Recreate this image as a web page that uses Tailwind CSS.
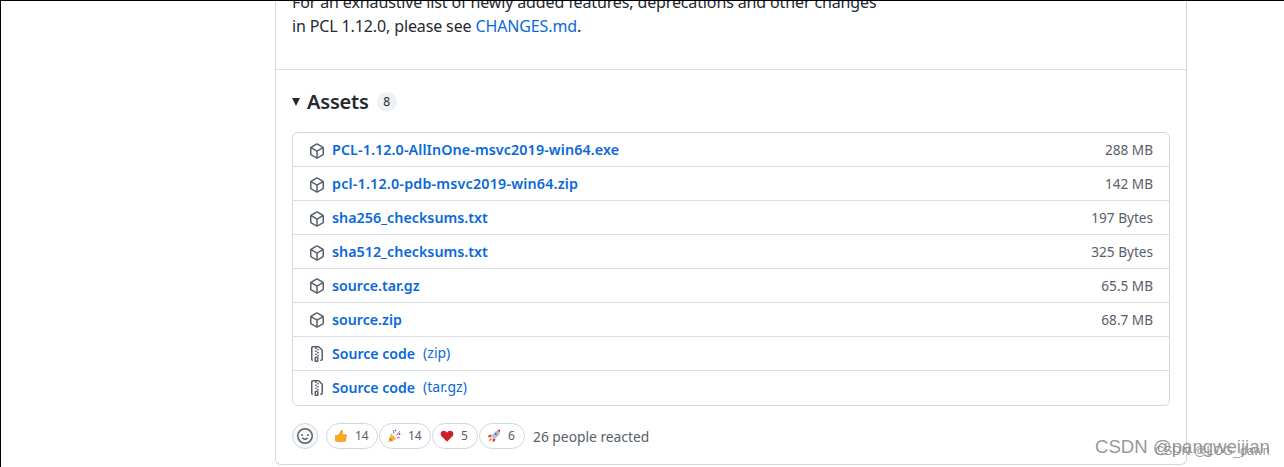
<!DOCTYPE html>
<html lang="en">
<head>
    <meta charset="UTF-8">
    <title>Release PCL 1.12.0</title>
    <script src="https://cdn.jsdelivr.net/npm/@tailwindcss/browser@4"></script>
</head>
<body class="bg-white font-['Noto_Sans',sans-serif] text-[#24292f]">

<div class="relative h-[467px] w-[1284px] overflow-hidden border-l border-t border-l-black border-t-black">

    <!-- Release card -->
    <div class="ml-[274px] mt-[-11px] h-[475px] w-[912px] rounded-b-md border-x border-b border-[#d0d7de]">
        <div class="h-[80px] border-b border-[#d8dee4] px-4 text-base leading-6 tracking-[-0.13px]">
            <p class="whitespace-nowrap">For an exhaustive list of newly added features, deprecations and other changes</p>
            <p>in PCL 1.12.0, please see <a href="#" class="text-[#0969da]">CHANGES.md</a>.</p>
        </div>

        <div class="px-4">
            <div class="mt-[20px] flex h-6 items-center">
                <span class="h-0 w-0 border-x-[4px] border-t-[8px] border-x-transparent border-t-[#24292f]"></span>
                <h2 class="ml-[7px] text-[20px] font-semibold tracking-[-0.2px]">Assets</h2>
                <span class="ml-2 flex h-5 w-[20px] items-center justify-center rounded-full bg-[#eff1f3] text-xs">8</span>
            </div>

            <!-- Asset list -->
            <div class="mt-[18px] h-[274px] w-[878px] rounded-md border border-[#d0d7de] text-[13.6px]">
                <div class="flex h-[33px] items-center justify-between pl-4 pr-4">
                    <div class="flex items-center gap-[7px]">
                        <svg class="mt-[2px]" width="16" height="16" viewBox="0 0 16 16" fill="#57606a"><path d="m8.878.392 5.25 3.045c.54.314.872.89.872 1.514v6.098a1.75 1.75 0 0 1-.872 1.514l-5.25 3.045a1.75 1.75 0 0 1-1.756 0l-5.25-3.045A1.75 1.75 0 0 1 1 11.049V4.951c0-.624.332-1.201.872-1.514L7.122.392a1.75 1.75 0 0 1 1.756 0ZM7.875 1.69l-4.63 2.685L8 7.133l4.755-2.758-4.63-2.685a.248.248 0 0 0-.25 0ZM2.5 5.677v5.372c0 .09.047.171.125.216l4.625 2.683V8.432Zm6.25 8.271 4.625-2.683a.25.25 0 0 0 .125-.216V5.677L8.75 8.432Z"/></svg>
                        <a href="#" class="text-[14.3px] font-semibold tracking-[0.1px] text-[#0969da]">PCL-1.12.0-AllInOne-msvc2019-win64.exe</a>
                    </div>
                    <span class="mt-[2px] text-[#57606a]">288 MB</span>
                </div>
                <div class="flex h-[34px] items-center justify-between border-t border-[#d8dee4] pl-4 pr-4">
                    <div class="flex items-center gap-[7px]">
                        <svg class="mt-[2px]" width="16" height="16" viewBox="0 0 16 16" fill="#57606a"><path d="m8.878.392 5.25 3.045c.54.314.872.89.872 1.514v6.098a1.75 1.75 0 0 1-.872 1.514l-5.25 3.045a1.75 1.75 0 0 1-1.756 0l-5.25-3.045A1.75 1.75 0 0 1 1 11.049V4.951c0-.624.332-1.201.872-1.514L7.122.392a1.75 1.75 0 0 1 1.756 0ZM7.875 1.69l-4.63 2.685L8 7.133l4.755-2.758-4.63-2.685a.248.248 0 0 0-.25 0ZM2.5 5.677v5.372c0 .09.047.171.125.216l4.625 2.683V8.432Zm6.25 8.271 4.625-2.683a.25.25 0 0 0 .125-.216V5.677L8.75 8.432Z"/></svg>
                        <a href="#" class="text-[14.3px] font-semibold tracking-[0.2px] text-[#0969da]">pcl-1.12.0-pdb-msvc2019-win64.zip</a>
                    </div>
                    <span class="mt-[2px] text-[#57606a]">142 MB</span>
                </div>
                <div class="flex h-[34px] items-center justify-between border-t border-[#d8dee4] pl-4 pr-4">
                    <div class="flex items-center gap-[7px]">
                        <svg class="mt-[2px]" width="16" height="16" viewBox="0 0 16 16" fill="#57606a"><path d="m8.878.392 5.25 3.045c.54.314.872.89.872 1.514v6.098a1.75 1.75 0 0 1-.872 1.514l-5.25 3.045a1.75 1.75 0 0 1-1.756 0l-5.25-3.045A1.75 1.75 0 0 1 1 11.049V4.951c0-.624.332-1.201.872-1.514L7.122.392a1.75 1.75 0 0 1 1.756 0ZM7.875 1.69l-4.63 2.685L8 7.133l4.755-2.758-4.63-2.685a.248.248 0 0 0-.25 0ZM2.5 5.677v5.372c0 .09.047.171.125.216l4.625 2.683V8.432Zm6.25 8.271 4.625-2.683a.25.25 0 0 0 .125-.216V5.677L8.75 8.432Z"/></svg>
                        <a href="#" class="text-[14.3px] font-semibold text-[#0969da]">sha256_checksums.txt</a>
                    </div>
                    <span class="mt-[2px] text-[#57606a]">197 Bytes</span>
                </div>
                <div class="flex h-[34px] items-center justify-between border-t border-[#d8dee4] pl-4 pr-4">
                    <div class="flex items-center gap-[7px]">
                        <svg class="mt-[2px]" width="16" height="16" viewBox="0 0 16 16" fill="#57606a"><path d="m8.878.392 5.25 3.045c.54.314.872.89.872 1.514v6.098a1.75 1.75 0 0 1-.872 1.514l-5.25 3.045a1.75 1.75 0 0 1-1.756 0l-5.25-3.045A1.75 1.75 0 0 1 1 11.049V4.951c0-.624.332-1.201.872-1.514L7.122.392a1.75 1.75 0 0 1 1.756 0ZM7.875 1.69l-4.63 2.685L8 7.133l4.755-2.758-4.63-2.685a.248.248 0 0 0-.25 0ZM2.5 5.677v5.372c0 .09.047.171.125.216l4.625 2.683V8.432Zm6.25 8.271 4.625-2.683a.25.25 0 0 0 .125-.216V5.677L8.75 8.432Z"/></svg>
                        <a href="#" class="text-[14.3px] font-semibold text-[#0969da]">sha512_checksums.txt</a>
                    </div>
                    <span class="mt-[2px] text-[#57606a]">325 Bytes</span>
                </div>
                <div class="flex h-[34px] items-center justify-between border-t border-[#d8dee4] pl-4 pr-4">
                    <div class="flex items-center gap-[7px]">
                        <svg class="mt-[2px]" width="16" height="16" viewBox="0 0 16 16" fill="#57606a"><path d="m8.878.392 5.25 3.045c.54.314.872.89.872 1.514v6.098a1.75 1.75 0 0 1-.872 1.514l-5.25 3.045a1.75 1.75 0 0 1-1.756 0l-5.25-3.045A1.75 1.75 0 0 1 1 11.049V4.951c0-.624.332-1.201.872-1.514L7.122.392a1.75 1.75 0 0 1 1.756 0ZM7.875 1.69l-4.63 2.685L8 7.133l4.755-2.758-4.63-2.685a.248.248 0 0 0-.25 0ZM2.5 5.677v5.372c0 .09.047.171.125.216l4.625 2.683V8.432Zm6.25 8.271 4.625-2.683a.25.25 0 0 0 .125-.216V5.677L8.75 8.432Z"/></svg>
                        <a href="#" class="text-[14.2px] font-semibold text-[#0969da]">source.tar.gz</a>
                    </div>
                    <span class="mt-[2px] text-[#57606a]">65.5 MB</span>
                </div>
                <div class="flex h-[34px] items-center justify-between border-t border-[#d8dee4] pl-4 pr-4">
                    <div class="flex items-center gap-[7px]">
                        <svg class="mt-[2px]" width="16" height="16" viewBox="0 0 16 16" fill="#57606a"><path d="m8.878.392 5.25 3.045c.54.314.872.89.872 1.514v6.098a1.75 1.75 0 0 1-.872 1.514l-5.25 3.045a1.75 1.75 0 0 1-1.756 0l-5.25-3.045A1.75 1.75 0 0 1 1 11.049V4.951c0-.624.332-1.201.872-1.514L7.122.392a1.75 1.75 0 0 1 1.756 0ZM7.875 1.69l-4.63 2.685L8 7.133l4.755-2.758-4.63-2.685a.248.248 0 0 0-.25 0ZM2.5 5.677v5.372c0 .09.047.171.125.216l4.625 2.683V8.432Zm6.25 8.271 4.625-2.683a.25.25 0 0 0 .125-.216V5.677L8.75 8.432Z"/></svg>
                        <a href="#" class="text-[14.2px] font-semibold text-[#0969da]">source.zip</a>
                    </div>
                    <span class="mt-[2px] text-[#57606a]">68.7 MB</span>
                </div>
                <div class="flex h-[34px] items-center border-t border-[#d8dee4] pl-4 pr-4">
                    <div class="flex items-center gap-[7px]">
                        <svg class="mt-[2px]" width="16" height="16" viewBox="0 0 16 16" fill="#57606a"><path d="M3.5 1.75v11.5c0 .09.048.173.126.217a.75.75 0 0 1-.752 1.298A1.748 1.748 0 0 1 2 13.25V1.75C2 .784 2.784 0 3.75 0h5.586c.464 0 .909.185 1.237.513l2.914 2.914c.329.328.513.773.513 1.237v8.586A1.75 1.75 0 0 1 12.25 15h-.5a.75.75 0 0 1 0-1.5h.5a.25.25 0 0 0 .25-.25V4.664a.25.25 0 0 0-.073-.177L9.513 1.573a.25.25 0 0 0-.177-.073H7.25a.75.75 0 0 1 0 1.5h-.5a.75.75 0 0 1 0-1.5h-3a.25.25 0 0 0-.25.25Zm3.75 8.75h.5c.966 0 1.75.784 1.75 1.75v3a.75.75 0 0 1-.75.75h-2.5a.75.75 0 0 1-.75-.75v-3c0-.966.784-1.75 1.75-1.75ZM6 5.25a.75.75 0 0 1 .75-.75h.5a.75.75 0 0 1 0 1.5h-.5A.75.75 0 0 1 6 5.25Zm.75 2.25h.5a.75.75 0 0 1 0 1.5h-.5a.75.75 0 0 1 0-1.5ZM8 6.75A.75.75 0 0 1 8.75 6h.5a.75.75 0 0 1 0 1.5h-.5A.75.75 0 0 1 8 6.75ZM8.75 3h.5a.75.75 0 0 1 0 1.5h-.5a.75.75 0 0 1 0-1.5ZM8 9.75A.75.75 0 0 1 8.75 9h.5a.75.75 0 0 1 0 1.5h-.5A.75.75 0 0 1 8 9.75Zm-1 2.5v2.25h1v-2.25a.25.25 0 0 0-.25-.25h-.5a.25.25 0 0 0-.25.25Z"/></svg>
                        <a href="#" class="text-[14.1px] font-semibold text-[#0969da]">Source code</a>
                        <a href="#" class="ml-[1px] text-sm text-[#0969da]">(zip)</a>
                    </div>
                </div>
                <div class="flex h-[34px] items-center border-t border-[#d8dee4] pl-4 pr-4">
                    <div class="flex items-center gap-[7px]">
                        <svg class="mt-[2px]" width="16" height="16" viewBox="0 0 16 16" fill="#57606a"><path d="M3.5 1.75v11.5c0 .09.048.173.126.217a.75.75 0 0 1-.752 1.298A1.748 1.748 0 0 1 2 13.25V1.75C2 .784 2.784 0 3.75 0h5.586c.464 0 .909.185 1.237.513l2.914 2.914c.329.328.513.773.513 1.237v8.586A1.75 1.75 0 0 1 12.25 15h-.5a.75.75 0 0 1 0-1.5h.5a.25.25 0 0 0 .25-.25V4.664a.25.25 0 0 0-.073-.177L9.513 1.573a.25.25 0 0 0-.177-.073H7.25a.75.75 0 0 1 0 1.5h-.5a.75.75 0 0 1 0-1.5h-3a.25.25 0 0 0-.25.25Zm3.75 8.75h.5c.966 0 1.75.784 1.75 1.75v3a.75.75 0 0 1-.75.75h-2.5a.75.75 0 0 1-.75-.75v-3c0-.966.784-1.75 1.75-1.75ZM6 5.25a.75.75 0 0 1 .75-.75h.5a.75.75 0 0 1 0 1.5h-.5A.75.75 0 0 1 6 5.25Zm.75 2.25h.5a.75.75 0 0 1 0 1.5h-.5a.75.75 0 0 1 0-1.5ZM8 6.75A.75.75 0 0 1 8.75 6h.5a.75.75 0 0 1 0 1.5h-.5A.75.75 0 0 1 8 6.75ZM8.75 3h.5a.75.75 0 0 1 0 1.5h-.5a.75.75 0 0 1 0-1.5ZM8 9.75A.75.75 0 0 1 8.75 9h.5a.75.75 0 0 1 0 1.5h-.5A.75.75 0 0 1 8 9.75Zm-1 2.5v2.25h1v-2.25a.25.25 0 0 0-.25-.25h-.5a.25.25 0 0 0-.25.25Z"/></svg>
                        <a href="#" class="text-[14.1px] font-semibold text-[#0969da]">Source code</a>
                        <a href="#" class="ml-[1px] text-sm text-[#0969da]">(tar.gz)</a>
                    </div>
                </div>
            </div>

            <!-- Reactions -->
            <div class="mt-[17px] flex h-[26px] items-center">
                <span class="flex h-[26px] w-[26px] items-center justify-center rounded-full border border-[#d0d7de] bg-[#f6f8fa]">
                    <svg width="16" height="16" viewBox="0 0 16 16" fill="#57606a"><path d="M8 0a8 8 0 1 1 0 16A8 8 0 0 1 8 0ZM1.5 8a6.5 6.5 0 1 0 13 0 6.5 6.5 0 0 0-13 0Zm3.82 1.636a.75.75 0 0 1 1.038.175c.103.118.22.222.35.31.264.178.683.37 1.285.37.602 0 1.02-.192 1.285-.371.13-.088.247-.192.35-.31a.75.75 0 0 1 1.229.862 3.3 3.3 0 0 1-.714.658c-.63.418-1.37.638-2.127.629-.946 0-1.652-.308-2.126-.63a3.331 3.331 0 0 1-.715-.657.75.75 0 0 1 .145-1.036ZM12 7a1 1 0 1 1-2 0 1 1 0 0 1 2 0ZM5 8a1 1 0 1 1 0-2 1 1 0 0 1 0 2Z"/></svg>
                </span>
                <span class="ml-2 flex h-[26px] w-[52px] items-center rounded-full border border-[#d0d7de] pl-[7px] text-xs text-[#57606a]">
                    <svg width="14" height="14" viewBox="0 0 14 14"><path d="M1 7c0-.6.4-1 1-1h2l2.300-3.400C6.800 1.800 7 1.200 7 .8c1.300-.4 2.200.7 2 2L8.600 5.200h2.900c1 0 1.600.8 1.400 1.700l-.9 4.800c-.2.800-.8 1.300-1.500 1.300H3c-1.200 0-2-.8-2-2Z" fill="#f9a825"/></svg>
                    <span class="ml-[7px]">14</span>
                </span>
                <span class="ml-px flex h-[26px] w-[52px] items-center rounded-full border border-[#d0d7de] pl-[7px] text-xs text-[#57606a]">
                    <svg width="14" height="14" viewBox="0 0 14 14"><path d="M1 13.500 4 4.500 9.500 10Z" fill="#f4b63f"/><path d="M2.700 8.500 6 11.800 4.500 12.400 2.200 10Z" fill="#c9772b"/><circle cx="8.500" cy="1.500" r=".9" fill="#3b88c3"/><circle cx="12.500" cy="5" r=".9" fill="#dd2e44"/><path d="M6 1l1.200 3.500M9.500 6.500 13 2M10 8.500l3 .5" stroke="#8d6cc9" stroke-width="1" fill="none"/></svg>
                    <span class="ml-[7px]">14</span>
                </span>
                <span class="ml-px flex h-[26px] w-[46px] items-center rounded-full border border-[#d0d7de] pl-[7px] text-xs text-[#57606a]">
                    <svg width="14" height="14" viewBox="0 0 14 14"><path d="M7 12.800 1.300 7C-.2 5 .9 1.800 3.800 1.800 5.200 1.800 6.400 2.600 7 3.800 7.600 2.600 8.800 1.800 10.200 1.800 13.100 1.800 14.200 5 12.700 7Z" fill="#c9202c"/></svg>
                    <span class="ml-[7px]">5</span>
                </span>
                <span class="ml-px flex h-[26px] w-[46px] items-center rounded-full border border-[#d0d7de] pl-[7px] text-xs text-[#57606a]">
                    <svg width="14" height="14" viewBox="0 0 14 14"><path d="M3.800 7.200 8.500 2.500c1-1 2.200-1.500 3.200-1.600L10 1l3-.2-.2 3c-.1 1-.6 2.200-1.600 3.200L6.800 10.200Z" fill="#b8c4ce"/><path d="M10.500 1.100 13 .8l-.2 2.600Z" fill="#dd2e44"/><circle cx="8.800" cy="5" r="1.200" fill="#3b88c3"/><path d="M4.400 5.600 1.900 6 1 8.300h2.700ZM8.400 9.600 8 12.100 5.700 13v-2.700Z" fill="#dd2e44"/><path d="M3.600 8.800 1.300 12.700 5.200 10.400Z" fill="#f4900c"/></svg>
                    <span class="ml-[7px]">6</span>
                </span>
                <span class="ml-2 mt-[2px] text-[13.8px] text-[#57606a]">26 people reacted</span>
            </div>
        </div>
    </div>

    <!-- Watermarks over the page -->
    <span class="absolute left-[1094px] top-[436px] font-['Liberation_Sans',sans-serif] text-[18.6px] leading-5 whitespace-nowrap text-[#8b8b8b]/90">CSDN @pangweijian</span>
    <span class="absolute left-[1154px] top-[442px] font-['Liberation_Sans',sans-serif] text-[12.5px] leading-4 whitespace-nowrap text-[#8b8b8b]/90">CSDN @LOG_dawn</span>
</div>

</body>
</html>
